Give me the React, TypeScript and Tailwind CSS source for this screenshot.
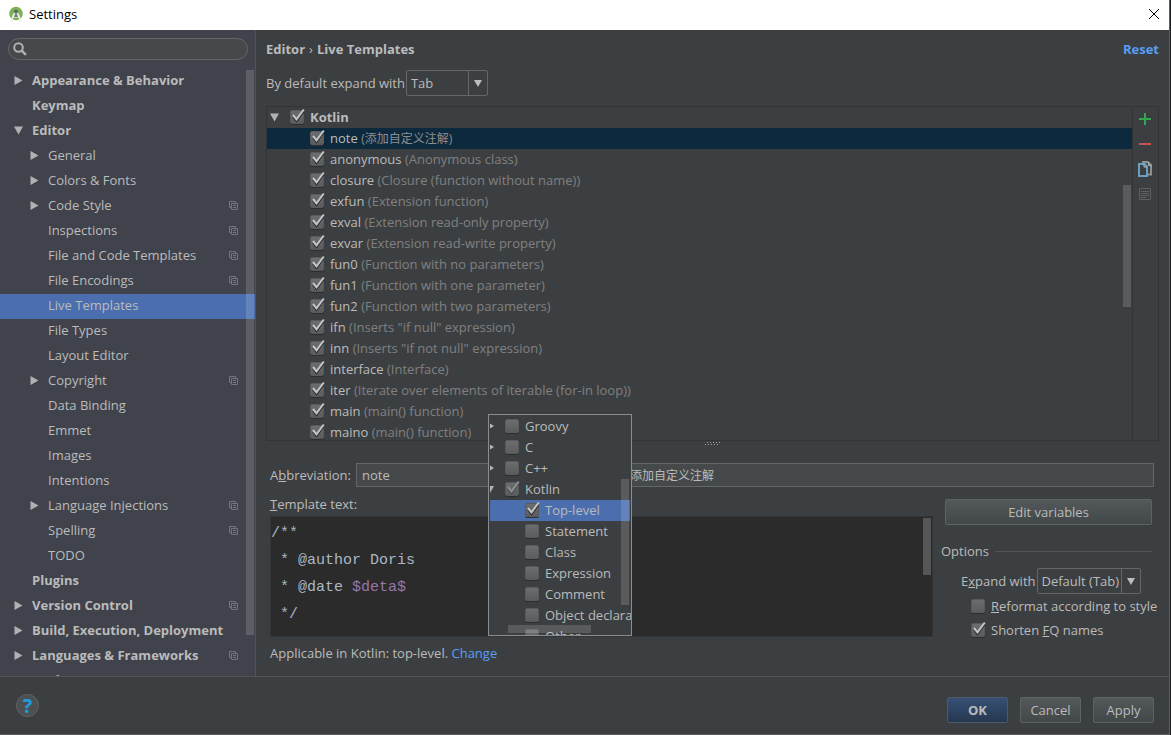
import { useState } from "react";
import clsx from "clsx";

type Node = {
  label: string;
  level: 0 | 1;
  arrow?: "open" | "closed";
  project?: boolean;
};

const NODES: Node[] = [
  { label: "Appearance & Behavior", level: 0, arrow: "closed" },
  { label: "Keymap", level: 0 },
  { label: "Editor", level: 0, arrow: "open" },
  { label: "General", level: 1, arrow: "closed" },
  { label: "Colors & Fonts", level: 1, arrow: "closed" },
  { label: "Code Style", level: 1, arrow: "closed", project: true },
  { label: "Inspections", level: 1, project: true },
  { label: "File and Code Templates", level: 1, project: true },
  { label: "File Encodings", level: 1, project: true },
  { label: "Live Templates", level: 1 },
  { label: "File Types", level: 1 },
  { label: "Layout Editor", level: 1 },
  { label: "Copyright", level: 1, arrow: "closed", project: true },
  { label: "Data Binding", level: 1 },
  { label: "Emmet", level: 1 },
  { label: "Images", level: 1 },
  { label: "Intentions", level: 1 },
  { label: "Language Injections", level: 1, arrow: "closed", project: true },
  { label: "Spelling", level: 1, project: true },
  { label: "TODO", level: 1 },
  { label: "Plugins", level: 0 },
  { label: "Version Control", level: 0, arrow: "closed", project: true },
  { label: "Build, Execution, Deployment", level: 0, arrow: "closed" },
  { label: "Languages & Frameworks", level: 0, arrow: "closed", project: true },
  { label: "Tools", level: 0, arrow: "closed" },
];

const TEMPLATES = [
  { name: "note", desc: "添加自定义注解" },
  { name: "anonymous", desc: "Anonymous class" },
  { name: "closure", desc: "Closure (function without name)" },
  { name: "exfun", desc: "Extension function" },
  { name: "exval", desc: "Extension read-only property" },
  { name: "exvar", desc: "Extension read-write property" },
  { name: "fun0", desc: "Function with no parameters" },
  { name: "fun1", desc: "Function with one parameter" },
  { name: "fun2", desc: "Function with two parameters" },
  { name: "ifn", desc: 'Inserts "if null" expression' },
  { name: "inn", desc: 'Inserts "if not null" expression' },
  { name: "interface", desc: "Interface" },
  { name: "iter", desc: "Iterate over elements of iterable (for-in loop)" },
  { name: "main", desc: "main() function" },
  { name: "maino", desc: "main() function" },
];

const LANGUAGES = ["Groovy", "C", "C++"];

const KOTLIN_CONTEXTS = [
  "Top-level",
  "Statement",
  "Class",
  "Expression",
  "Comment",
  "Object declaration",
  "Other",
];

function Arrow({ open, small }: { open?: boolean; small?: boolean }) {
  if (small) {
    return (
      <svg className="h-2 w-1 shrink-0" viewBox="0 0 4 8" fill="#b4b6b7">
        <path d={open ? "M0 1h4L0 8z" : "M0 1.5 4 4 0 6.5z"} />
      </svg>
    );
  }
  return (
    <svg className="size-[9px] shrink-0" viewBox="0 0 9 9" fill="#afb1b3">
      <path d={open ? "M0 0.5h9L4.5 8.5z" : "M0.5 0 8.5 4.5 0.5 9z"} />
    </svg>
  );
}

function CheckBox({
  id,
  label,
  checked = false,
  partial,
}: {
  id?: string;
  label?: string;
  checked?: boolean;
  partial?: boolean;
}) {
  const [on, setOn] = useState(checked);
  return (
    <span className="relative flex size-[14px] shrink-0">
      <input
        type="checkbox"
        id={id}
        aria-label={label}
        checked={on}
        onChange={(e) => setOn(e.target.checked)}
        className="size-[14px] appearance-none rounded-xs border border-[#585a5b] bg-linear-to-b from-[#6b6d6e] to-[#5a5c5d] shadow-[0_1px_0_#2c2e2f]"
      />
      {on ? (
        <svg
          className="pointer-events-none absolute -top-[2px] left-0 h-4 w-4"
          viewBox="0 0 16 16"
          fill="none"
        >
          <path
            d="M3 8.500 6.500 13 13.500 3.500"
            stroke={partial ? "#4a4c4d" : "#2b2d2e"}
            strokeWidth="2"
          />
          <path
            d="M3 7 6.500 11.300 13.800 1.500"
            stroke={partial ? "#8e9091" : "#c4c6c7"}
            strokeWidth="2"
          />
        </svg>
      ) : null}
    </span>
  );
}

function ProjectIcon() {
  return (
    <svg className="size-[9px] shrink-0" viewBox="0 0 9 9" fill="none" stroke="#72767c">
      <path d="M2 6.5H.5v-6h6V2M2.5 2.5h6v6h-6zM4 4.5h3M4 6.5h3" />
    </svg>
  );
}

function Sidebar() {
  const [active, setActive] = useState("Live Templates");
  return (
    <aside className="flex w-64 shrink-0 flex-col border-r border-[#515355] bg-[#40434c]">
      <label className="mt-2 mr-[7px] ml-2 flex h-[22px] items-center rounded-full border border-[#646668] bg-[#45494a] pl-1">
        <svg className="size-[14px] shrink-0" viewBox="0 0 14 14" fill="none" stroke="#afb1b3">
          <circle cx="5.5" cy="5.5" r="4.3" strokeWidth="2" />
          <path d="m8.7 8.7 4.2 4.2" strokeWidth="2.4" />
        </svg>
        <input
          type="text"
          aria-label="Search settings"
          className="min-w-0 flex-1 bg-transparent px-1 outline-none"
        />
      </label>
      <nav className="relative mt-[9px] min-h-0 flex-1 overflow-hidden">
        <ul>
          {NODES.map((n) => (
            <li key={n.label}>
              <button
                onClick={() => setActive(n.label)}
                className={clsx(
                  "flex h-[25px] w-full items-center pr-[17px] pb-[3px] text-left",
                  n.level === 0 ? "pl-[14px] font-bold" : "pl-[30px]",
                  active === n.label && "bg-[#4b6eaf]",
                )}
              >
                <span className="flex w-[18px] shrink-0">
                  {n.arrow ? <Arrow open={n.arrow === "open"} /> : null}
                </span>
                <span className="flex-1 whitespace-nowrap">{n.label}</span>
                {n.project ? <ProjectIcon /> : null}
              </button>
            </li>
          ))}
        </ul>
        <div className="absolute top-px right-px h-[565px] w-2 bg-white/15" />
      </nav>
    </aside>
  );
}

function Combo({ id, options, className }: { id: string; options: string[]; className: string }) {
  return (
    <span className={clsx("relative flex", className)}>
      <select
        id={id}
        className="h-[26px] w-full appearance-none rounded-xs border border-[#646668] bg-[#3c3f41] pr-5 pl-1 outline-none"
      >
        {options.map((o) => (
          <option key={o}>{o}</option>
        ))}
      </select>
      <span className="pointer-events-none absolute inset-y-0 right-0 flex w-5 items-center justify-center border-l border-[#646668]">
        <svg className="h-[7px] w-2" viewBox="0 0 8 7" fill="#bbbdbe">
          <path d="M0 0h8L4 7z" />
        </svg>
      </span>
    </span>
  );
}

function TemplateList() {
  const [active, setActive] = useState("note");
  return (
    <div className="flex min-h-0 flex-1 border border-[#323435]">
      <div className="relative flex-1 overflow-hidden">
        <div className="flex h-[21px] items-center pb-px pl-[3px] font-bold">
          <Arrow open />
          <span className="ml-[11px] flex items-center gap-[6px]">
            <CheckBox id="group-kotlin" checked />
            <label htmlFor="group-kotlin">Kotlin</label>
          </span>
        </div>
        <ul>
          {TEMPLATES.map((t) => (
            <li
              key={t.name}
              onClick={() => setActive(t.name)}
              className={clsx(
                "flex h-[21px] items-center gap-[6px] pb-px pl-[43px] whitespace-nowrap",
                active === t.name && "bg-[#0d293e]",
              )}
            >
              <CheckBox label={t.name} checked />
              <span>
                {t.name}{" "}
                <span className={active === t.name ? "text-xs text-[#8c8e8f]" : "text-[#808080]"}>
                  ({t.desc})
                </span>
              </span>
            </li>
          ))}
        </ul>
        <div className="absolute top-[78px] right-px h-[122px] w-2 bg-[#595b5d]" />
      </div>
      <div className="flex w-[26px] flex-col items-center gap-[9px] border-l border-[#323435] pt-1 pr-[2px]">
        <button aria-label="Add">
          <svg className="size-4" viewBox="0 0 16 16" fill="none" stroke="#2fa84f" strokeWidth="2">
            <path d="M2 8h12M8 2v12" />
          </svg>
        </button>
        <button aria-label="Remove">
          <svg className="size-4" viewBox="0 0 16 16" fill="none" stroke="#c75450" strokeWidth="2">
            <path d="M2 8h12" />
          </svg>
        </button>
        <button aria-label="Duplicate">
          <svg className="size-4" viewBox="0 0 16 16" fill="none" strokeWidth="2">
            <path d="M5 1h6M10 1.500h1.500L14 4v9.500h-3" stroke="#8f9192" />
            <path d="M2 3h5.500L10 5.500V15H2z" stroke="#6a9fc0" />
            <path d="M7 3v3h3" stroke="#9ec3da" strokeWidth="1" />
            <path d="M11.500 1.500v3h3" stroke="#b0b2b3" strokeWidth="1" />
          </svg>
        </button>
        <button aria-label="Restore defaults" disabled>
          <svg className="size-4" viewBox="0 0 16 16" fill="none" stroke="#5d5f60">
            <path d="M2.500 2.500h11v11h-11zM4 5.500h8M4 7.500h8M4 9.500h8M4 11.500h5" />
          </svg>
        </button>
      </div>
    </div>
  );
}

function ContextPopup() {
  return (
    <div className="absolute bottom-10 left-[232px] h-[222px] w-36 overflow-hidden border border-[#8a8c8d] bg-[#3c3f41] p-px">
      {LANGUAGES.map((l) => (
        <div key={l} className="flex h-[21px] items-center pb-px">
          <Arrow small />
          <span className="ml-[11px] flex items-center gap-[6px]">
            <CheckBox id={`ctx-${l}`} />
            <label htmlFor={`ctx-${l}`}>{l}</label>
          </span>
        </div>
      ))}
      <div className="flex h-[21px] items-center pb-px">
        <Arrow small open />
        <span className="ml-[11px] flex items-center gap-[6px]">
          <CheckBox id="ctx-kotlin" checked partial />
          <label htmlFor="ctx-kotlin">Kotlin</label>
        </span>
      </div>
      {KOTLIN_CONTEXTS.map((c, i) => (
        <div
          key={c}
          className={clsx(
            "flex h-[21px] items-center gap-[6px] pb-px pl-[35px] whitespace-nowrap",
            i === 0 && "bg-[#4b6eaf]",
          )}
        >
          <CheckBox id={`ctx-${c}`} checked={i === 0} />
          <label htmlFor={`ctx-${c}`}>{c}</label>
        </div>
      ))}
      <div className="absolute top-16 right-[2px] h-[126px] w-2 bg-white/15" />
      <div className="absolute bottom-[2px] left-[19px] h-2 w-[83px] bg-white/15" />
    </div>
  );
}

function TemplateEditor() {
  return (
    <div className="pr-[5px] pl-1">
      <div className="flex h-6 items-center">
        <label htmlFor="abbr" className="w-[86px]">
          A<u>b</u>breviation:
        </label>
        <input
          id="abbr"
          defaultValue="note"
          className="h-6 w-[180px] border border-[#646668] bg-[#45494a] px-[5px] outline-none"
        />
        <label htmlFor="desc" className="ml-2 w-20">
          <u>D</u>escription:
        </label>
        <input
          id="desc"
          defaultValue="添加自定义注解"
          className="h-6 min-w-0 flex-1 border border-[#646668] bg-[#45494a] px-[5px] text-xs outline-none"
        />
      </div>
      <div className="mt-2 flex">
        <div className="min-w-0 flex-1">
          <label htmlFor="template-text" className="block h-[21px] leading-[18px]">
            <u>T</u>emplate text:
          </label>
          <div
            id="template-text"
            role="textbox"
            aria-label="Template text"
            contentEditable
            suppressContentEditableWarning
            className="relative h-[121px] border border-[#323435] bg-[#2b2b2b] pt-[3px] font-['Liberation_Mono',monospace] text-[15px] leading-[27px] whitespace-pre text-[#a9b7c6] outline-none"
          >
            <div>/**</div>
            <div> * @author Doris</div>
            <div>
              {" * @date "}
              <span className="text-[#9876aa]">$deta$</span>
            </div>
            <div> */</div>
            <div className="absolute top-px right-px h-[57px] w-2 bg-[#555657]" />
          </div>
          <p className="mt-[7px] leading-[18px]">
            Applicable in Kotlin: top-level.{" "}
            <a href="#context" className="text-[#589df6]">
              Change
            </a>
          </p>
        </div>
        <div className="ml-2 w-[213px] pt-1">
          <button className="ml-1 h-[26px] w-[207px] rounded-xs border border-[#5e6263] bg-linear-to-b from-[#53585a] to-[#424849]">
            Edit variables
          </button>
          <fieldset className="mt-4">
            <legend className="flex w-full items-center gap-[6px] leading-5">
              Options
              <span className="mr-[5px] h-px flex-1 bg-[#515456]" />
            </legend>
            <div className="mt-[7px] flex items-center gap-px pl-5">
              <label htmlFor="expand">
                E<u>x</u>pand with
              </label>
              <Combo
                id="expand"
                options={["Default (Tab)", "Tab", "Enter", "Space"]}
                className="w-[104px]"
              />
            </div>
            <div className="flex h-6 items-center gap-[6px] pl-[30px] whitespace-nowrap">
              <CheckBox id="reformat" />
              <label htmlFor="reformat">
                <u>R</u>eformat according to style
              </label>
            </div>
            <div className="flex h-6 items-center gap-[6px] pl-[30px] whitespace-nowrap">
              <CheckBox id="shorten" checked />
              <label htmlFor="shorten">
                Shorten <u>F</u>Q names
              </label>
            </div>
          </fieldset>
        </div>
      </div>
    </div>
  );
}

export default function App() {
  return (
    <div className="bg-[#1e1f20] pr-px">
      <div className="flex h-screen flex-col border-r border-b border-[#5a5c5e] bg-[#3c3f41] font-['Open_Sans','Noto_Sans_CJK_SC',sans-serif] text-[13px] leading-[18px] text-[#bbbbbb]">
        <header className="flex h-[30px] shrink-0 items-center bg-white px-[9px] pb-[2px] text-black">
          <svg className="size-4" viewBox="0 0 16 16">
            <circle cx="7" cy="7.500" r="6.800" fill="#7cb252" />
            <path d="M7 4 2 15.500M7 4l5 11.500" stroke="#eef1ec" strokeWidth="1.800" />
            <path d="M3.500 9.500q3.500 3 7 0" stroke="#eef1ec" strokeWidth="1.500" fill="none" />
            <circle cx="7" cy="5.500" r="2" fill="#5b6166" />
            <path d="M7 6 5 11h4z" fill="#7a8084" />
          </svg>
          <h1 className="ml-1 flex-1">Settings</h1>
          <button aria-label="Close">
            <svg className="size-3" viewBox="0 0 12 12" fill="none" stroke="#000">
              <path d="m1 1 10 10M11 1 1 11" />
            </svg>
          </button>
        </header>

        <div className="flex min-h-0 flex-1">
          <Sidebar />
          <main className="relative flex min-w-0 flex-1 flex-col px-[10px] pb-[14px]">
            <div className="mt-[10px] flex items-center font-bold">
              <span>Editor</span>
              <span className="mx-1 font-normal">›</span>
              <span className="flex-1">Live Templates</span>
              <button className="font-bold text-[#589df6]">Reset</button>
            </div>
            <div className="mt-3 mb-[10px] flex items-center gap-px">
              <label htmlFor="default-expand">By default expand with</label>
              <Combo id="default-expand" options={["Tab", "Enter", "Space"]} className="w-[82px]" />
            </div>
            <TemplateList />
            <div className="flex h-[22px] justify-center">
              <svg className="mt-px h-1 w-[15px]" viewBox="0 0 15 4" stroke="#a0a2a3">
                <path d="M2 .500h13M0 2.500h13" strokeDasharray="1 2" />
              </svg>
            </div>
            <TemplateEditor />
            <ContextPopup />
          </main>
        </div>

        <footer className="flex h-[58px] shrink-0 items-center gap-3 border-t border-[#515355] pt-2 pr-[15px] pl-4">
          <button
            aria-label="Help"
            className="mb-2 size-[23px] rounded-full border border-[#616466] bg-[#4c5052] text-xl leading-5 font-bold text-[#1e9fe0]"
          >
            ?
          </button>
          <span className="flex-1" />
          <button className="h-[26px] w-[61px] rounded-xs border border-[#4e5a68] bg-linear-to-b from-[#365075] to-[#263850] font-bold">
            OK
          </button>
          <button className="h-[26px] w-[61px] rounded-xs border border-[#5e6263] bg-linear-to-b from-[#53585a] to-[#424849]">
            Cancel
          </button>
          <button className="h-[26px] w-[61px] rounded-xs border border-[#5e6263] bg-linear-to-b from-[#53585a] to-[#424849]">
            Apply
          </button>
        </footer>
      </div>
    </div>
  );
}
